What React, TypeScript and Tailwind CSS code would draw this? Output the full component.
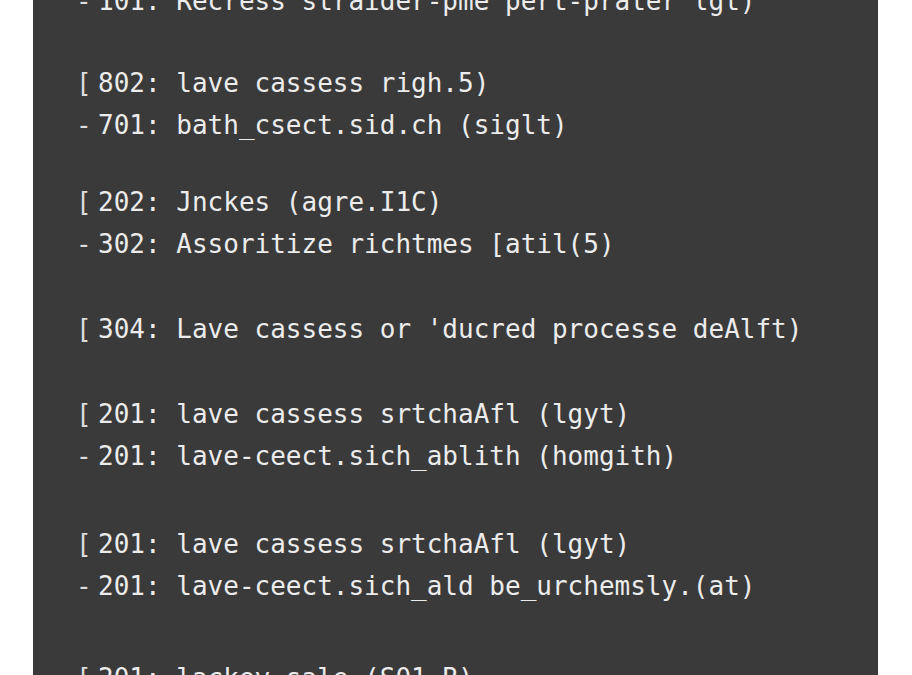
const lines: { mark: string; text: string; gap: string }[] = [
    { mark: "-", text: "101: Recress straider-pme pert-prater lgt)", gap: "mt-0" },
    { mark: "[", text: "802: lave cassess righ.5)", gap: "mt-[40px]" },
    { mark: "-", text: "701: bath_csect.sid.ch (siglt)", gap: "mt-0" },
    { mark: "[", text: "202: Jnckes (agre.I1C)", gap: "mt-[35px]" },
    { mark: "-", text: "302: Assoritize richtmes [atil(5)", gap: "mt-0" },
    { mark: "[", text: "304: Lave cassess or 'ducred processe deAlft)", gap: "mt-[43px]" },
    { mark: "[", text: "201: lave cassess srtchaAfl (lgyt)", gap: "mt-[43px]" },
    { mark: "-", text: "201: lave-ceect.sich_ablith (homgith)", gap: "mt-0" },
    { mark: "[", text: "201: lave cassess srtchaAfl (lgyt)", gap: "mt-[46px]" },
    { mark: "-", text: "201: lave-ceect.sich_ald be_urchemsly.(at)", gap: "mt-0" },
    { mark: "[", text: "201: lackey sale (S01 B)", gap: "mt-[50px]" },
];

const App = () => {
    return (
        <div className="h-[675px] w-[912px] overflow-hidden bg-white">
            <div className="ml-[33px] h-full w-[845px] overflow-hidden bg-[#3a3a3a] pl-[43px]">
                <div className="-mt-[20px] font-['DejaVu_Sans_Mono',monospace] text-[26px] leading-[42px] text-[#ececec]">
                    {lines.map((line, i) => (
                        <div key={i} className={`flex h-[42px] whitespace-pre ${line.gap}`}>
                            <span className="w-[22px] text-[#dcdcdc]">{line.mark}</span>
                            <span>{line.text}</span>
                        </div>
                    ))}
                </div>
            </div>
        </div>
    );
};

export default App;
